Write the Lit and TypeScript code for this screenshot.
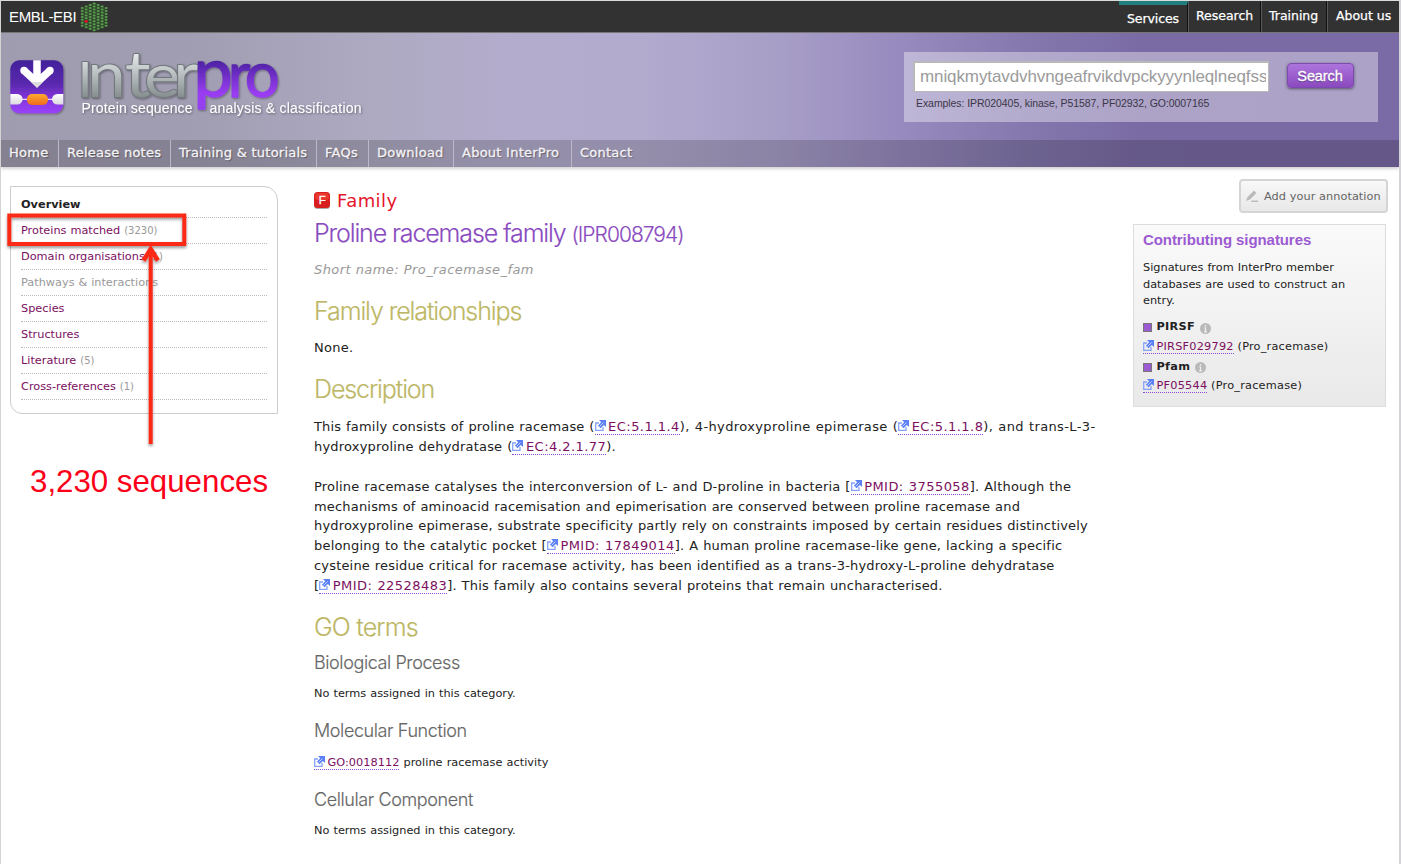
import { LitElement, html, svg, css } from "lit";
import { customElement, property } from "lit/decorators.js";

@customElement("ext-link")
class ExtLink extends LitElement {
  static styles = css`
    :host { white-space: nowrap; }
    .link { color: #7b0f5f; text-decoration: none; border-bottom: 1px dotted #8a4bd0; }
    .icon { width: 11px; height: 11px; margin-right: 2.5px; vertical-align: var(--icon-lift, -1px); }
  `;
  render() {
    return html`<a class="link"><svg class="icon" viewBox="0 0 11 11"><path d="M4 3H.7v7.300H8V7" fill="none" stroke="#86a2fa" stroke-width="1.300"/><path d="M4 0h7v7L8.800 4.900 5.500 8.200 2.900 5.700 6.200 2.300z" fill="#5b80f5"/><path d="M4.500 6.500l4-4" stroke="#dfe7ff" stroke-width=".8"/></svg><slot></slot></a>`;
  }
}

@customElement("site-header")
class SiteHeader extends LitElement {
  static styles = css`
    :host { display: block; font-family: "DejaVu Sans", Verdana, sans-serif; }
    .top { height: 31px; background: #323232; border-bottom: 1px solid #777; display: flex; color: #fff; }
    .brand { display: flex; align-items: center; padding-left: 8px; font: 15px "Liberation Sans", sans-serif; gap: 4px; flex: 1; }
    .brandname { width: 67px; letter-spacing: -0.35px; white-space: nowrap; }
    .hex { width: 28px; height: 30px; }
    .tab { box-sizing: border-box; height: 31px; padding: 5px 0 0 7px; font-size: 12.5px; line-height: 19px; border-left: 1px solid #595959; border-right: 1px solid #111; letter-spacing: -0.02px; white-space: nowrap; -webkit-text-stroke: 0.25px #fff; }
    .tab.active { border-left: 0; border-top: 4px solid #237f7d; padding-top: 4px; letter-spacing: -0.1px; }
    .t0 { width: 69px; padding-left: 8px; } .t1 { width: 73px; } .t2 { width: 66px; } .t3 { width: 72px; border-right: 0; padding-left: 8px; }
    .banner { background: linear-gradient(90deg, #a09caf 0, #a19db2 200px, #aeaac2 380px, #b3accc 500px, #b3abce 640px, #a79ec7 780px, #978abe 900px, #8377ad 1030px, #7a6ba5 1140px, #7a6aa5 100%); box-shadow: 0 2px 3px rgba(0,0,0,.18); }
    .hero { height: 107px; display: flex; justify-content: space-between; }
    .logo { width: 380px; height: 107px; overflow: visible; }
    .search { box-sizing: border-box; width: 474px; height: 70px; margin: 19px 21px 0 0; background: rgba(255,255,255,.38); padding: 9px 0 0 9px; font-family: "Liberation Sans", sans-serif; }
    .row { display: flex; gap: 17.500px; }
    .input { box-sizing: border-box; width: 356px; height: 31px; border: 1px solid #b9b9b9; border-width: 2px 1px 1px 2px; background: #fff; color: #9b9b9b; font-size: 17px; line-height: 28px; padding: 0 2px 0 5px; }
    .query { overflow: hidden; white-space: nowrap; letter-spacing: -0.1px; }
    .button { box-sizing: border-box; width: 67px; height: 25px; margin-top: 2px; border: 1px solid #7d4ab0; border-radius: 4px; background: linear-gradient(#ad74dc, #8b4abf); color: #fff; font-size: 14.5px; line-height: 24px; text-align: center; box-shadow: 0 1px 3px rgba(0,0,0,.5); text-shadow: 0 1px 1px rgba(0,0,0,.4); letter-spacing: -0.1px; -webkit-text-stroke: .3px #fff; }
    .examples { font-size: 10.5px; line-height: 14px; margin: 4px 0 0 3px; color: #3b3648; white-space: nowrap; letter-spacing: -0.07px; }
    .nav { height: 27px; display: flex; background: rgba(0,0,0,.17); }
    .item { box-sizing: border-box; padding-left: 8px; border-right: 1px solid #bdb8c9; color: #f3f2f5; font-size: 13px; line-height: 25px; white-space: nowrap; text-shadow: 1px 1px 1px rgba(0,0,0,.4); -webkit-text-stroke: .3px #f3f2f5; letter-spacing: 0.25px; }
    .item:last-child { border: 0; }
    .n0 { width: 58px; } .n1 { width: 112px; } .n2 { width: 146px; } .n3 { width: 52px; } .n4 { width: 85px; } .n5 { width: 118px; }
  `;
  private dots() {
    const out = [];
    for (let c = 0; c < 7; c++) {
      const off = Math.abs(c - 3);
      const n = 10 - off;
      for (let r = 0; r < n; r++) {
        const x = 2.2 + c * 4;
        const y = 1.6 + r * 2.95 + off * 1.475;
        const red = c === 1 && r === 5;
        out.push(svg`<ellipse cx=${x} cy=${y} rx=${red ? 1.8 : 1.5} ry=${red ? 1.4 : 1} fill=${red ? "#e0102a" : "#5c9c50"} />`);
      }
    }
    return out;
  }
  render() {
    const tabs = ["Services", "Research", "Training", "About us"];
    const nav = ["Home", "Release notes", "Training & tutorials", "FAQs", "Download", "About InterPro", "Contact"];
    return html`
      <div class="top">
        <div class="brand"><span class="brandname">EMBL-EBI</span><svg class="hex" viewBox="0 0 28 30"><path d="M14 0l13 6.500v17L14 30 1 23.500v-17z" fill="#2f4a2c"/>${this.dots()}</svg></div>
        ${tabs.map((t, i) => html`<div class="tab t${i} ${i === 0 ? "active" : ""}">${t}</div>`)}
      </div>
      <div class="banner">
        <div class="hero">
          <svg class="logo" viewBox="1 33 380 107" role="img" aria-label="InterPro">
            <defs>
              <linearGradient id="tile" x1="0" y1="0" x2="0" y2="1"><stop offset="0" stop-color="#43219b"/><stop offset=".45" stop-color="#5a29ae"/><stop offset=".72" stop-color="#8336dc"/><stop offset="1" stop-color="#9a41fa"/></linearGradient>
              <linearGradient id="metal" gradientUnits="userSpaceOnUse" x1="0" y1="54" x2="0" y2="98"><stop offset="0" stop-color="#e6e9ea"/><stop offset=".5" stop-color="#b5bbbd"/><stop offset="1" stop-color="#848c8e"/></linearGradient>
              <linearGradient id="violet" gradientUnits="userSpaceOnUse" x1="0" y1="60" x2="0" y2="108"><stop offset="0" stop-color="#4a22a0"/><stop offset=".7" stop-color="#9a3df2"/><stop offset="1" stop-color="#9340ee"/></linearGradient>
              <linearGradient id="pill" x1="0" y1="0" x2="0" y2="1"><stop offset="0" stop-color="#ffab30"/><stop offset="1" stop-color="#ee6a1a"/></linearGradient>
              <linearGradient id="cap" x1="0" y1="0" x2="0" y2="1"><stop offset="0" stop-color="#fff"/><stop offset="1" stop-color="#d9d9e0"/></linearGradient>
              <filter id="drop" x="-10%" y="-10%" width="125%" height="125%"><feDropShadow dx="1" dy="1" stdDeviation=".8" flood-opacity=".4"/></filter>
            </defs>
            <rect x="10.300" y="60.300" width="53" height="53" rx="9" fill="url(#tile)" filter="url(#drop)"/>
            <path d="M37 60.300V80M24 70.500l13 12 13-12" fill="none" stroke="#fff" stroke-width="7.500"/>
            <circle cx="24" cy="70.500" r="3.700" fill="#fff"/><circle cx="50" cy="70.500" r="3.700" fill="#fff"/>
            <path d="M37 88l-6-6h12z" fill="#ddd"/>
            <path d="M10.300 94h7a5.200 5.200 0 0 1 0 10.600h-7zM63.300 94h-6a5.200 5.200 0 0 0 0 10.600h6z" fill="url(#cap)"/>
            <path d="M22 99.300h31" stroke="#fff" stroke-width="1"/>
            <rect x="27" y="94" width="21" height="11" rx="5" fill="url(#pill)"/>
            <g filter="url(#drop)" font-family="Lato, sans-serif" stroke-linejoin="round">
              <text y="97" transform="scale(1.13 1)" fill="url(#metal)" stroke="#70777a" stroke-width="1.800" paint-order="stroke" font-size="61"><tspan x="68.500" font-size="48">I</tspan><tspan x="77.300">n</tspan><tspan x="110.300" font-size="64">t</tspan><tspan x="127.600" font-size="60">e</tspan><tspan x="153.300">r</tspan></text>
              <text y="97" fill="url(#violet)" stroke="url(#violet)" stroke-width="1.500" font-size="61"><tspan x="193.500" font-size="70">p</tspan><tspan x="228">r</tspan><tspan x="245">o</tspan></text>
            </g>
            <g font-family="Liberation Sans, sans-serif" font-size="14" fill="#fff" filter="url(#drop)">
              <text x="81.500" y="113" textLength="111">Protein sequence</text>
              <text x="209.500" y="113" textLength="152">analysis &amp; classification</text>
            </g>
          </svg>
          <div class="search">
            <div class="row"><div class="input"><div class="query">mniqkmytavdvhvngeafrvikdvpckyyynleqlneqfss</div></div><div class="button">Search</div></div>
            <div class="examples">Examples: IPR020405, kinase, P51587, PF02932, GO:0007165</div>
          </div>
        </div>
        <div class="nav">${nav.map((t, i) => html`<div class="item n${i}">${t}</div>`)}</div>
      </div>`;
  }
}

@customElement("side-menu")
class SideMenu extends LitElement {
  static styles = css`
    :host { display: block; box-sizing: border-box; width: 268px; height: 228px; border: 1px solid #ccc; border-radius: 0 14px 0 12px; padding: 5px 10px 0; }
    .item { box-sizing: border-box; height: 26px; border-bottom: 1px dotted #bbb; font: 11.3px/25px "DejaVu Sans", Verdana, sans-serif; color: #7b0f5f; white-space: nowrap; word-spacing: .3px; }
    .current { font-weight: bold; color: #222; letter-spacing: 0; }
    .off { color: #999; }
    .count { color: #999; font-size: 10px; }
  `;
  render() {
    const items: [string, string, string][] = [
      ["Overview", "", "current"], ["Proteins matched", "(3230)", ""], ["Domain organisations", "(1)", ""],
      ["Pathways & interactions", "", "off"], ["Species", "", ""], ["Structures", "", ""], ["Literature", "(5)", ""], ["Cross-references", "(1)", ""],
    ];
    return html`${items.map(([t, n, c]) => html`<div class="item ${c}">${t} <span class="count">${n}</span></div>`)}`;
  }
}

@customElement("signature-panel")
class SignaturePanel extends LitElement {
  @property({ type: Array }) entries = [["PIRSF", "PIRSF029792"], ["Pfam", "PF05544"]];
  static styles = css`
    :host { display: block; box-sizing: border-box; width: 253px; height: 183px; border: 1px solid #ddd; background: linear-gradient(#fafafa, #e9e9e9); padding: 6px 9px 0; font: 11.3px/16.500px "DejaVu Sans", Verdana, sans-serif; color: #222; }
    .title { font: bold 15px/18px "Liberation Sans", sans-serif; color: #9c5bd2; margin-bottom: 11px; white-space: nowrap; letter-spacing: -0.08px; }
    .text { white-space: nowrap; margin-bottom: 8px; word-spacing: .4px; letter-spacing: 0; }
    .db { display: flex; align-items: center; gap: 4.5px; height: 20px; font-weight: bold; letter-spacing: .3px; }
    .swatch { box-sizing: border-box; width: 9px; height: 9px; background: #9c5bd2; border: 1px solid #777; }
    .info { width: 11px; height: 11px; margin-top: 1px; }
    .acc { height: 19.500px; line-height: 17px; white-space: nowrap; letter-spacing: .22px; }
  `;
  render() {
    return html`
      <div class="title">Contributing signatures</div>
      <div class="text">Signatures from InterPro member<br>databases are used to construct an<br>entry.</div>
      ${this.entries.map(([db, acc]) => html`
        <div class="db"><span class="swatch"></span>${db}<svg class="info" viewBox="0 0 11 11"><circle cx="5.500" cy="5.500" r="5.500" fill="#b9b9b9"/><path d="M5.500 2v1.500M4.300 4.800h1.200v4M4 8.800h3" stroke="#eee" stroke-width="1.300" fill="none"/></svg></div>
        <div class="acc"><ext-link>${acc}</ext-link> (Pro_racemase)</div>`)}`;
  }
}

@customElement("app-root")
class AppRoot extends LitElement {
  static styles = css`
    :host { display: block; position: relative; box-sizing: border-box; width: 1401px; height: 864px; overflow: hidden; background: #fff; border-top: 1px solid #d8dcda; border-left: 1px solid #d3d3d3; border-right: 2px solid #d3d3d8; font-family: "DejaVu Sans", Verdana, sans-serif; color: #222; }
    .page { display: flex; align-items: flex-start; }
    .menu { margin: 19px 0 0 9px; }
    .main { margin-left: 36px; width: 818px; padding-top: 21px; white-space: nowrap; }
    .type { display: flex; align-items: center; gap: 7px; height: 24px; font-size: 18px; letter-spacing: .45px; color: #e5152b; }
    .badge { width: 16px; height: 17px; }
    h1, h2, h3, p { margin: 0; font-weight: normal; }
    h1, h2, h3 { font-family: Inter, "Liberation Sans", sans-serif; font-weight: 300; -webkit-text-stroke: .15px; }
    h1 { color: #8a4bc0; font-size: 25px; line-height: 32px; margin-top: 5px; letter-spacing: -1.13px; }
    .id { font-size: 21px; letter-spacing: -0.98px; }
    h2 { color: #bdb765; font-size: 25px; line-height: 32px; letter-spacing: -1.1px; }
    .go { letter-spacing: -0.8px; }
    h3 { color: #666; font-size: 18px; line-height: 24px; letter-spacing: -0.4px; }
    .short { font-size: 13px; letter-spacing: .44px; font-style: italic; color: #999; line-height: 20px; margin: 9px 0 15px; }
    .none { font-size: 13px; letter-spacing: .25px; line-height: 20px; margin: 11px 0 15px; }
    .para { --icon-lift: 0px; font-size: 13px; line-height: 19.800px; letter-spacing: 0.18px; word-spacing: .5px; margin: 12px 0 0; }
    .para ext-link { letter-spacing: .45px; }
    .wide { letter-spacing: .38px; }
    .mid { letter-spacing: .2px; }
    .second { margin-top: 20.300px; margin-bottom: 15px; }
    .small { font-size: 11.300px; line-height: 20px; margin: 9px 0 15.300px; word-spacing: .5px; }
    .term { margin-top: 9.600px; margin-bottom: 15px; letter-spacing: .03px; }
    .first { margin-top: 8px; }
    .aside { display: flex; flex-direction: column; align-items: flex-end; width: 256px; padding-top: 12px; }
    .annotate { box-sizing: border-box; width: 149px; height: 34px; border: 2px solid #d5d5d5; border-radius: 4px; background: linear-gradient(#f8f8f8, #e8e8e8); display: flex; align-items: center; gap: 6px; padding-left: 5px; font-size: 11.300px; letter-spacing: .06px; color: #666; white-space: nowrap; }
    .pencil { width: 12px; height: 13px; }
    .panel { margin: 11px 2px 0 0; }
    .overlay { position: absolute; left: -1px; top: -1px; width: 300px; height: 520px; }
  `;
  render() {
    return html`
      <site-header></site-header>
      <div class="page">
        <side-menu class="menu"></side-menu>
        <div class="main">
          <div class="type"><svg class="badge" viewBox="0 0 16 17"><rect y="1" width="16" height="16" rx="3.500" fill="#aaa"/><rect width="16" height="16" rx="3.500" fill="#d81e1e"/><rect x="1" y="1" width="14" height="7" rx="3" fill="#e8392c"/><text x="8.300" y="12" font-family="Liberation Sans" letter-spacing="0" font-size="11.500" fill="#fff" stroke="#fff" stroke-width=".3" text-anchor="middle">F</text></svg>Family</div>
          <h1>Proline racemase family <span class="id">(IPR008794)</span></h1>
          <p class="short">Short name: Pro_racemase_fam</p>
          <h2>Family relationships</h2>
          <p class="none">None.</p>
          <h2>Description</h2>
          <p class="para">This family consists of proline racemase (<ext-link>EC:5.1.1.4</ext-link><span class="wide">), 4-hydroxyproline epimerase (<ext-link>EC:5.1.1.8</ext-link>), and trans-L-3-</span><br><span class="mid">hydroxyproline dehydratase (<ext-link>EC:4.2.1.77</ext-link>).</span></p>
          <p class="para second"><span class="mid">Proline racemase catalyses the interconversion of L- and D-proline in bacteria [<ext-link>PMID: 3755058</ext-link>]. Although the</span><br>mechanisms of aminoacid racemisation and epimerisation are conserved between proline racemase and<br>hydroxyproline epimerase, substrate specificity partly rely on constraints imposed by certain residues distinctively<br><span class="mid">belonging to the catalytic pocket [<ext-link>PMID: 17849014</ext-link>]. A human proline racemase-like gene, lacking a specific</span><br>cysteine residue critical for racemase activity, has been identified as a trans-3-hydroxy-L-proline dehydratase<br>[<ext-link>PMID: 22528483</ext-link>]. <span class="mid">This family also contains several proteins that remain uncharacterised.</span></p>
          <h2 class="go">GO terms</h2>
          <h3 class="first">Biological Process</h3>
          <p class="small">No terms assigned in this category.</p>
          <h3>Molecular Function</h3>
          <p class="small term"><ext-link>GO:0018112</ext-link> proline racemase activity</p>
          <h3>Cellular Component</h3>
          <p class="small">No terms assigned in this category.</p>
        </div>
        <div class="aside">
          <div class="annotate"><svg class="pencil" viewBox="0 0 12 13"><path d="M0 11l1.500-4L8 .5 10.500 3 4 9.500zM6 10.500h6V12H4.500z" fill="#bbb"/></svg>Add your annotation</div>
          <signature-panel class="panel"></signature-panel>
        </div>
      </div>
      <svg class="overlay" viewBox="0 0 300 520">
        <defs><filter id="sh" filterUnits="userSpaceOnUse" x="0" y="200" width="300" height="320"><feDropShadow dx="0" dy="2" stdDeviation="1.500" flood-opacity=".4"/></filter></defs>
        <g fill="none" stroke="#fb2a18" stroke-width="4" filter="url(#sh)">
          <rect x="9.300" y="215.500" width="175" height="28.500"/>
          <path d="M150.700 444V250"/><path d="M143.500 260.500l7.200-11.500 7.200 11.500" stroke-width="4.500"/>
        </g>
        <text x="30" y="492" font-family="Liberation Sans, sans-serif" font-size="32" fill="#fb0018" textLength="238" lengthAdjust="spacingAndGlyphs">3,230 sequences</text>
      </svg>`;
  }
}
